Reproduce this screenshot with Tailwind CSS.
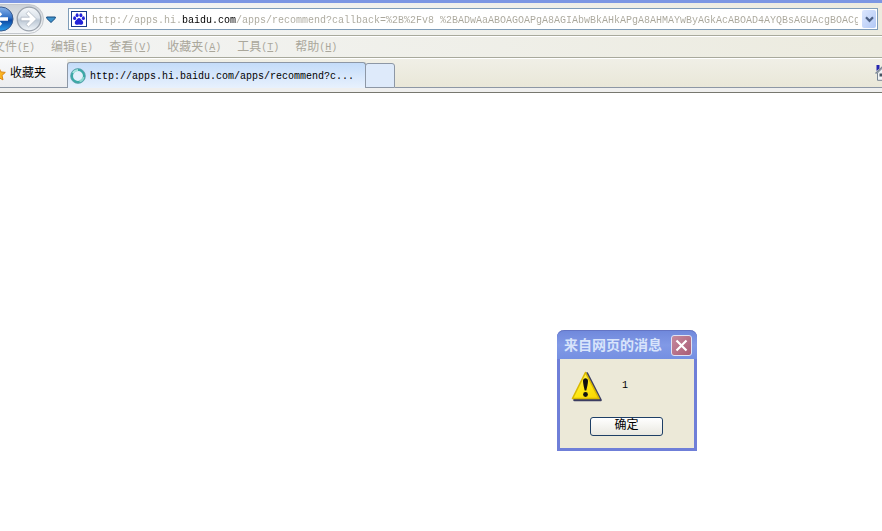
<!DOCTYPE html>
<html lang="zh-CN">
<head>
<meta charset="utf-8">
<title>http://apps.hi.baidu.com/apps/recommend</title>
<script src="https://cdn.jsdelivr.net/npm/@tailwindcss/browser@4"></script>
</head>
<body class="min-h-screen overflow-x-hidden bg-white font-['Liberation_Mono','Noto_Sans_CJK_SC',monospace] text-[12px] leading-4 text-black">
<header class="border-t-3 border-[#7b96e3]">
  <div class="flex h-[33px] items-center overflow-hidden border-b border-[#a8a99c] bg-linear-to-r from-[#f3f5f7] to-[#ecebdf]">
    <div class="-ml-[13px] flex h-[30px] w-[57px] shrink-0 items-center gap-0.5 rounded-r-full border border-[#c3c7cc] bg-linear-to-b from-[#cdd2d8] to-[#f4f6f8]">
      <button type="button" aria-label="后退" class="size-[26px] shrink-0">
        <svg viewBox="0 0 26 26" class="size-[26px]"><defs><linearGradient id="b" x2="0" y2="1"><stop stop-color="#8ab4ea"/><stop offset=".45" stop-color="#2f6fc6"/><stop offset=".55" stop-color="#0c47a2"/><stop offset="1" stop-color="#2aa0ee"/></linearGradient></defs><circle cx="13" cy="13" r="12" fill="url(#b)" stroke="#3a5a8c"/><path d="M20 13H8M13 7l-6 6 6 6" fill="none" stroke="#fff" stroke-width="3.4"/></svg>
      </button>
      <button type="button" aria-label="前进" class="size-[26px] shrink-0">
        <svg viewBox="0 0 26 26" class="size-[26px]"><defs><linearGradient id="f" x2="0" y2="1"><stop stop-color="#f4f7fa"/><stop offset=".45" stop-color="#dbe2ea"/><stop offset=".55" stop-color="#bcc8d5"/><stop offset="1" stop-color="#f2f6fa"/></linearGradient></defs><circle cx="13" cy="13" r="11.800" fill="url(#f)" stroke="#9aa2ac" stroke-width="1.300"/><path d="M5 11.200h8.500L10 7.600l2.600-2.400L20.500 13l-7.900 7.800-2.600-2.400 3.500-3.600H5z" fill="#fff" stroke="#aeb8c3" stroke-width=".8"/></svg>
      </button>
    </div>
    <button type="button" aria-label="最近浏览的页面" class="ml-0.5 h-4 w-[10px] shrink-0">
      <svg viewBox="0 0 10 16" class="h-4 w-[10px]"><path d="M.7 6h8.600v1.300L5 11.500 .7 7.300z" fill="#3d92cb" stroke="#164b80"/></svg>
    </button>
    <form class="mr-1 ml-3 flex h-[22px] min-w-0 flex-1 items-center border border-[#7f9db9] bg-white pl-0.5">
      <svg viewBox="0 0 16 16" class="size-4 shrink-0" aria-hidden="true"><rect x=".5" y=".5" width="15" height="15" fill="#fff" stroke="#173a8c"/><g fill="#2322d8"><ellipse cx="3.600" cy="7.200" rx="1.500" ry="1.900"/><ellipse cx="6.100" cy="4.200" rx="1.500" ry="2"/><ellipse cx="9.900" cy="4.200" rx="1.500" ry="2"/><ellipse cx="12.400" cy="7.200" rx="1.500" ry="1.900"/><path d="M8 7c1.500 0 2 1.500 3.200 2.600 1.300 1.200 1.500 3.900-.6 4.100-1 .1-1.600-.3-2.600-.3s-1.600.4-2.600.3c-2.100-.2-1.900-2.900-.6-4.100C6 8.500 6.500 7 8 7z"/></g></svg>
      <input type="text" aria-label="地址" spellcheck="false" class="ml-[5px] h-[18px] min-w-0 flex-1 bg-[linear-gradient(90deg,#aaa79b_90px,#000_90px,#000_144px,#aaa79b_144px)] bg-clip-text p-0 pt-0.5 text-[10px] leading-4 text-transparent outline-none" value="http://apps.hi.baidu.com/apps/recommend?callback=%2B%2Fv8 %2BADwAaABOAGOAPgA8AGIAbwBkAHkAPgA8AHMAYwByAGkAcABOAD4AYQBsAGUAcgBOACgA">
      <button type="button" aria-label="显示地址列表" class="mr-px ml-1 flex h-[18px] w-[14px] shrink-0 items-center justify-center rounded-xs bg-linear-to-br from-[#dce7fe] to-[#b2c8f5]">
        <svg viewBox="0 0 9 7" class="h-[7px] w-[9px]"><path d="M1 1.200l3.500 3.600L8 1.200" fill="none" stroke="#4d6185" stroke-width="2.200"/></svg>
      </button>
    </form>
  </div>
  <nav aria-label="菜单栏" class="flex h-[22px] items-center overflow-hidden border-t border-b border-t-white border-b-[#a8a99c] bg-linear-to-r from-[#f3f4f4] to-[#ecebdf] pt-0.5 text-[#aaa79b]">
    <div class="-ml-[7px] flex gap-4 whitespace-nowrap">
      <button type="button" class="flex">文件<span class="text-[10px]">(<u>F</u>)</span></button>
      <button type="button" class="flex">编辑<span class="text-[10px]">(<u>E</u>)</span></button>
      <button type="button" class="flex">查看<span class="text-[10px]">(<u>V</u>)</span></button>
      <button type="button" class="flex">收藏夹<span class="text-[10px]">(<u>A</u>)</span></button>
      <button type="button" class="flex">工具<span class="text-[10px]">(<u>T</u>)</span></button>
      <button type="button" class="flex">帮助<span class="text-[10px]">(<u>H</u>)</span></button>
    </div>
  </nav>
  <div class="flex h-[30px] items-end overflow-hidden border-t border-white bg-linear-to-b from-[#f0efe6] to-[#e9e7d8]">
    <button type="button" class="flex h-full w-[67px] shrink-0 items-center border-b border-[#8d97a5] bg-linear-to-b from-[#f8f9fa] to-[#ecedef] pt-0.5 whitespace-nowrap">
      <svg viewBox="0 0 14 14" class="-ml-2 size-[14px] shrink-0" aria-hidden="true"><path d="M7 .8l1.900 4.100 4.400.5-3.300 3 1 4.500L7 10.700l-4 2.200 1-4.500-3.300-3 4.400-.5z" fill="#fbb521" stroke="#dc8510"/></svg>
      <span class="ml-1">收藏夹</span>
    </button>
    <div role="tablist" class="flex shrink-0 items-end">
      <button type="button" role="tab" aria-selected="true" class="flex h-[26px] w-[299px] items-center rounded-t-[3px] border border-b-0 border-[#8d97a5] bg-linear-to-b from-[#c4dcf9] to-[#e8f1fd] pl-0.5">
        <svg viewBox="0 0 16 16" class="size-4 shrink-0" aria-hidden="true"><circle cx="8" cy="8" r="6.200" fill="#e4f0fb" stroke="#3aa9a6" stroke-width="2.400"/><path d="M3 5a6 6 0 0 1 5-3" fill="none" stroke="#a9e4df" stroke-width="2"/><path d="M13.500 9a6 6 0 0 1-4 4.500" fill="none" stroke="#8fd8d0" stroke-width="2"/><circle cx="8" cy="8" r="7.400" fill="none" stroke="#5a9cab" stroke-width=".7"/></svg>
        <span class="ml-1 pt-0.5 text-[10px]">http://apps.hi.baidu.com/apps/recommend?c...</span>
      </button>
      <button type="button" aria-label="新选项卡" class="-ml-px h-[25px] w-[30px] rounded-t-[3px] border border-[#8d97a5] bg-[#deeafa]"></button>
    </div>
    <div class="flex h-full min-w-0 flex-1 items-center justify-end border-b border-[#8d97a5]">
      <button type="button" aria-label="主页" class="-mr-[9px] size-4 shrink-0">
        <svg viewBox="0 0 16 16" class="size-4"><path d="M2.500 8v7.300h11V8L8 2.500z" fill="#f1f4f6" stroke="#788493"/><path d="M.5 8.500L8 1.200 15.300 8.500" fill="none" stroke="#7c8898" stroke-width="1.500"/><path d="M1.500 0h3v3.500l-3 2.500z" fill="#2525b0"/><path d="M4.500 8.500h4v3h-4z" fill="#475463"/></svg>
      </button>
    </div>
  </div>
  <div class="h-[5px] border-b border-[#77776f] bg-[#efefee]"></div>
</header>

<main></main>

<div role="dialog" aria-labelledby="dialog-title" class="absolute top-[330px] left-[557px] w-[140px] rounded-t-[7px] border-3 border-t-0 border-[#6f7fd8] bg-[#ece9d8]">
  <div class="-mx-[3px] flex h-[29px] items-center justify-between rounded-t-[7px] border-t border-[#6475c4] bg-linear-to-b from-[#7089dc] via-[#8199e6] to-[#7590e2] pr-[5px] pl-[7px]">
    <h1 id="dialog-title" class="pt-0.5 text-[14px] leading-4 font-bold whitespace-nowrap text-[#d8e4fb]">来自网页的消息</h1>
    <button type="button" aria-label="关闭" class="flex size-[21px] shrink-0 items-center justify-center rounded-[3px] border border-[#dfe2f3] bg-linear-to-br from-[#c58a9e] to-[#aa5c76]">
      <svg viewBox="0 0 13 13" class="size-[13px]"><path d="M1.500 1.500l10 10M11.500 1.500l-10 10" stroke="#fff" stroke-width="2.200"/></svg>
    </button>
  </div>
  <div class="flex items-center pt-[11px] pl-2.5">
    <svg viewBox="0 0 32 32" class="size-8 shrink-0" role="img" aria-label="警告"><defs><linearGradient id="w" x2="1" y2="1"><stop offset=".2" stop-color="#fff25a"/><stop offset=".5" stop-color="#ffe916"/><stop offset="1" stop-color="#f8d200"/></linearGradient></defs><path d="M17 3.500L30.500 30H4.500z" fill="#3b3d62" stroke="#3b3d62" stroke-width="2.600" stroke-linejoin="round"/><path d="M15.500 2.500L29 28.500H2.500z" fill="url(#w)" stroke="#d9b800" stroke-width="1.600" stroke-linejoin="round"/><path d="M13 11c0-3.600 5-3.600 5 0 0 3-1.100 6.500-1.700 9.500h-1.600C14.100 17.500 13 14 13 11z" fill="#111"/><circle cx="15.500" cy="24.500" r="2.400" fill="#111"/></svg>
    <p class="ml-5 text-[10px]">1</p>
  </div>
  <div class="flex pt-[15px] pb-3 pl-[30px]">
    <button type="button" class="h-[19px] w-[73px] rounded-[3px] border border-[#1e3f66] bg-linear-to-b from-white to-[#e9e8e0] leading-[17px]">确定</button>
  </div>
</div>
</body>
</html>
